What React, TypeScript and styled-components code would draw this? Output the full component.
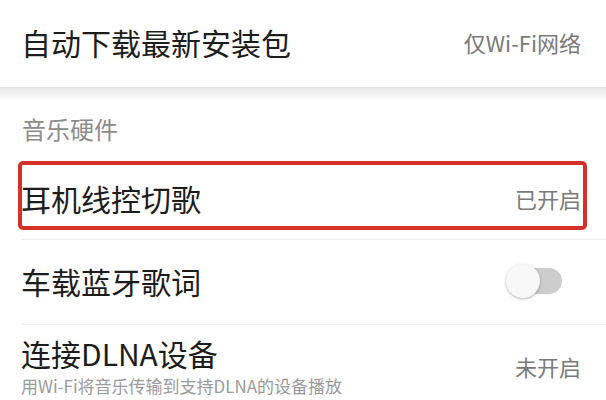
import React from 'react';
import styled, { createGlobalStyle } from 'styled-components';

const GlobalStyle = createGlobalStyle`
  html, body {
    margin: 0;
    padding: 0;
    background: #ffffff;
    overflow: hidden;
  }
  body {
    font-family: "Noto Sans CJK SC", "Noto Sans", sans-serif;
  }
`;

const Page = styled.div`
  width: 606px;
  height: 400px;
  display: flex;
  flex-direction: column;
  background: #ffffff;
  overflow: hidden;
`;

const Row = styled.div<{ height: number; divider?: boolean; shift?: number }>`
  position: relative;
  flex: none;
  height: ${props => props.height}px;
  display: flex;
  align-items: center;
  justify-content: space-between;
  padding: 0 25px ${props => props.shift || 0}px 21px;
  box-sizing: border-box;

  &::after {
    content: '';
    display: ${props => (props.divider ? 'block' : 'none')};
    position: absolute;
    left: 22px;
    right: 0;
    bottom: 0;
    height: 1px;
    background: #ededed;
  }
`;

const TextCol = styled.div`
  display: flex;
  flex-direction: column;
  gap: 4px;
`;

const Title = styled.div`
  font-size: 30px;
  line-height: 36px;
  color: #1c1c1c;
`;

const Sub = styled.div`
  font-size: 17px;
  line-height: 22px;
  color: #9a9a9a;
`;

const Value = styled.div`
  font-size: 22px;
  line-height: 30px;
  color: #7a7a7a;
`;

const SectionGap = styled.div`
  flex: none;
  height: 13px;
  border-top: 1px solid #e4e4e4;
  background: linear-gradient(#e8e8e8, #f4f4f4 55%, #ffffff);
`;

const SectionHeader = styled.div`
  flex: none;
  height: 54px;
  display: flex;
  align-items: center;
  padding: 0 22px;
  font-size: 24px;
  color: #8c8c8c;
`;

const Highlight = styled.div`
  position: absolute;
  left: 18px;
  right: 19px;
  top: 6px;
  bottom: 10px;
  border: 4px solid #d6302b;
  border-radius: 5px;
  pointer-events: none;
`;

const Toggle = styled.div`
  position: relative;
  width: 56px;
  height: 34px;
  margin-right: 19px;
`;

const Track = styled.div`
  position: absolute;
  left: 6px;
  right: 0;
  top: 4px;
  height: 26px;
  border-radius: 13px;
  background: #cdcdcd;
`;

const Knob = styled.div`
  position: absolute;
  left: 0;
  top: 0;
  width: 34px;
  height: 34px;
  border-radius: 50%;
  background: #f8f8f8;
  box-shadow: 0 1px 3px rgba(0, 0, 0, 0.3);
`;

const App: React.FC = () => (
  <>
    <GlobalStyle />
    <Page>
      <Row height={87} shift={4}>
        <Title>自动下载最新安装包</Title>
        <Value>仅Wi-Fi网络</Value>
      </Row>
      <SectionGap />
      <SectionHeader>音乐硬件</SectionHeader>
      <Row height={85} divider>
        <Title>耳机线控切歌</Title>
        <Value>已开启</Value>
        <Highlight />
      </Row>
      <Row height={85} divider shift={3}>
        <Title>车载蓝牙歌词</Title>
        <Toggle>
          <Track />
          <Knob />
        </Toggle>
      </Row>
      <Row height={88} shift={6}>
        <TextCol>
          <Title>连接DLNA设备</Title>
          <Sub>用Wi-Fi将音乐传输到支持DLNA的设备播放</Sub>
        </TextCol>
        <Value>未开启</Value>
      </Row>
    </Page>
  </>
);

export default App;
